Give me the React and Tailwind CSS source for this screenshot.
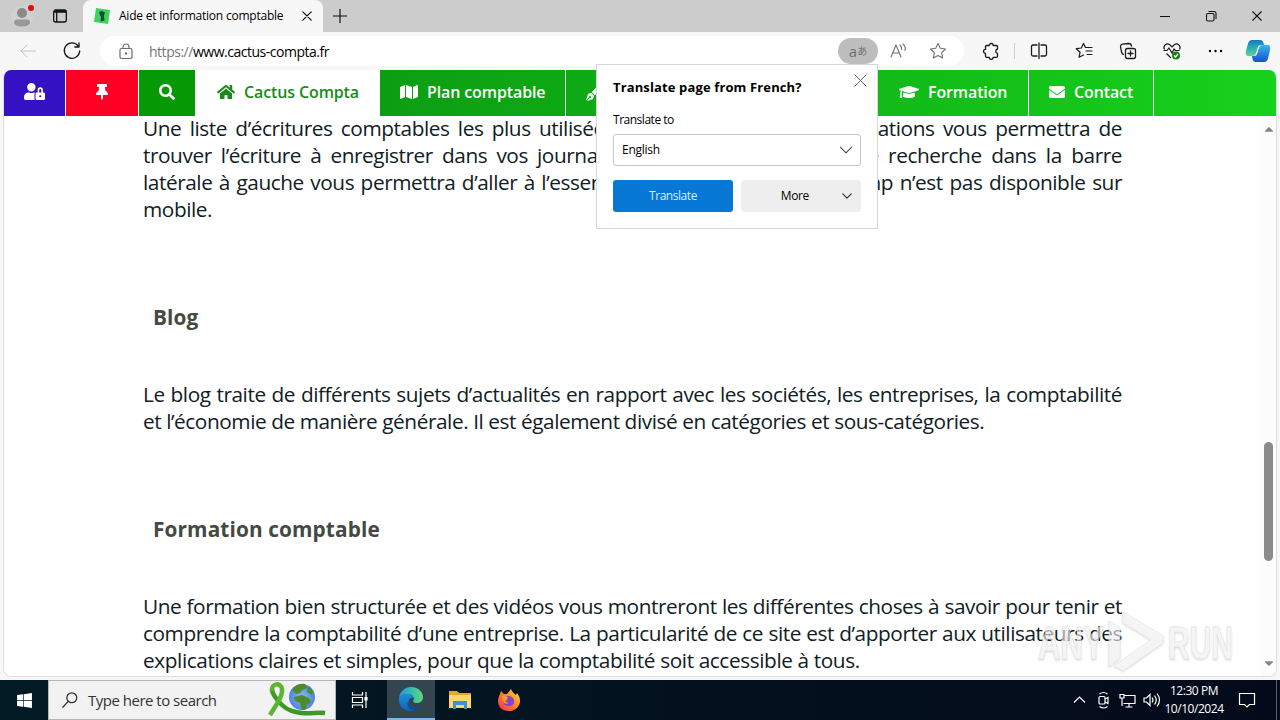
import React from 'react';
import {
  FaUserLock,
  FaThumbtack,
  FaSearch,
  FaHome,
  FaMap,
  FaPenFancy,
  FaGraduationCap,
  FaEnvelope,
  FaCaretUp,
  FaCaretDown,
  FaWindows,
} from 'react-icons/fa';

const Svg = ({ size = 20, sw = 1.1, className = '', children }) => (
  <svg
    width={size}
    height={size}
    viewBox="0 0 20 20"
    fill="none"
    stroke="currentColor"
    strokeWidth={sw}
    strokeLinecap="round"
    strokeLinejoin="round"
    className={`shrink-0 ${className}`}
  >
    {children}
  </svg>
);

const Cross = ({ size, sw, className }) => (
  <Svg size={size} sw={sw} className={className}>
    <path d="M4 4l12 12M16 4L4 16" />
  </Svg>
);

const Chevron = ({ size, sw, className }) => (
  <Svg size={size} sw={sw} className={className}>
    <path d="M3 6.5l7 7 7-7" />
  </Svg>
);

/* ===== Tab strip ===== */
const TabStrip = () => (
  <div className="flex h-8 shrink-0 bg-[#cccccc]">
    <div className="flex w-[83px] rounded-br-md">
      <svg width="40" height="32" viewBox="0 0 40 32" className="ml-1 shrink-0">
        <circle cx="18" cy="17" r="11" fill="#d3d1cf" />
        <circle cx="18" cy="13" r="5" fill="#8c8a88" />
        <path d="M10 22.500c0-2 1-3 3-3h10c2 0 3 1 3 3 0 2.500-4 4-8 4s-8-1.500-8-4z" fill="#9a9896" />
        <circle cx="27" cy="8" r="3" fill="#dd0b10" />
      </svg>
      <svg width="16" height="16" viewBox="0 0 16 16" fill="none" stroke="#111" strokeWidth="1.300" className="mt-2 ml-2">
        <rect x="1.700" y="2" width="12.600" height="12" rx="2" />
        <path d="M2 3.500h12" strokeWidth="2.500" />
        <path d="M4.700 4v10" />
      </svg>
    </div>
    <div className="flex w-[240px] items-center rounded-t-lg bg-[#f7f7f7] pl-[11px]">
      <svg width="16" height="16" viewBox="0 0 16 16" className="shrink-0">
        <path d="M2 0L16 2 14 16 0 14z" fill="#3ed160" />
        <path d="M5 4l3-1 3 1.500-1 3 .5 5-4 1 .5-5-1-1z" fill="#12502a" />
      </svg>
      <span className="ml-[9px] w-[181px] text-[12px] tracking-[-0.220px] whitespace-nowrap text-black">Aide et information comptable</span>
      <Cross size={14} sw={1.6} />
    </div>
    <div className="flex flex-1 items-center rounded-bl-md pl-[10px]">
      <svg width="14" height="14" viewBox="0 0 14 14" stroke="#111" strokeWidth="1.200">
        <path d="M7 0v14M0 7h14" />
      </svg>
    </div>
    <div className="flex w-[126px] items-center">
      <svg width="126" height="32" viewBox="0 0 126 32" fill="none" stroke="#111" strokeWidth="1.100">
        <path d="M6 16.500h10M98.500 11.500l9 9M107.500 11.500l-9 9" />
        <rect x="52.500" y="13.500" width="7.500" height="7.500" rx="1.500" />
        <path d="M54.500 11.500h5.500q2 0 2 2v5.500" />
      </svg>
    </div>
  </div>
);

/* ===== Address bar ===== */
const Toolbar = () => (
  <div className="flex h-[38px] shrink-0 items-center bg-[#f7f7f7]">
    <Svg size={20} sw={1} className="ml-[18px] text-[#c4c4c4]">
      <path d="M17.500 10H3M9 4l-6 6 6 6" />
    </Svg>
    <Svg size={20} sw={1.3} className="ml-[24px] text-[#1a1a1a]">
      <path d="M16.300 5.200A7.700 7.700 0 1 0 17.700 10M17 1.800v4.200h-4.200" />
    </Svg>
    <div className="ml-[18px] flex h-[30px] w-[864px] items-center rounded-full bg-white">
      <svg width="14" height="17" viewBox="0 0 14 17" fill="none" stroke="#6e6e6e" strokeWidth="1.200" className="ml-[19px]">
        <rect x="1" y="5.500" width="12" height="10" rx="1.500" />
        <path d="M4 5.500V4a3 3 0 0 1 6 0v1.500" />
        <circle cx="7" cy="10.500" r=".6" fill="#6e6e6e" />
      </svg>
      <span className="ml-4 text-[14px] tracking-[-0.480px] whitespace-nowrap text-black">
        <span className="text-[#767676]">https://</span>www.cactus-compta.fr
      </span>
      <div className="ml-auto flex h-[26px] w-10 items-center justify-center rounded-full bg-[#bdbdbd] text-[#707070]">
        <span className="text-[15px] leading-none">a</span>
        <span className="font-['Noto_Sans_CJK_JP'] text-[10px] leading-none">あ</span>
      </div>
      <Svg size={20} sw={1.1} className="ml-[10px] text-[#707070]">
        <path d="M3 16L8 4l5 12M4.800 12h6.500M12 4q2 2 1.500 4.500M15 3q3 2.500 2 6.500" />
      </Svg>
      <Svg size={20} sw={1.1} className="mr-4 ml-5 text-[#707070]">
        <path d="M10 2.500l2.300 4.800 5.200.7-3.800 3.700.9 5.300-4.600-2.500L5.400 17l.9-5.300L2.500 8l5.200-.7z" />
      </Svg>
    </div>
    <div className="flex flex-1 items-center text-[#1a1a1a]">
      <Svg size={20} sw={1.3} className="ml-[17px]">
        <path d="M5.500 4.500h2.700a2 2 0 0 1 4 0H15.500q1 0 1 1V8a2.200 2.200 0 0 0 0 4.300v3q0 1-1 1h-3.300a2 2 0 0 1-4 0H5.500q-1 0-1-1v-3a2 2 0 0 1 0-4V5.500q0-1 1-1z" />
      </Svg>
      <div className="ml-[13px] h-4 w-px bg-[#cfcfcf]" />
      <Svg size={20} sw={1.3} className="ml-[14px]">
        <path d="M8 4H4Q2.500 4 2.500 5.500v8Q2.500 15 4 15h4M12 4h4q1.500 0 1.500 1.500v8q0 1.500-1.500 1.500h-4M10 2v15.500" />
      </Svg>
      <Svg size={20} sw={1.2} className="ml-[25px]">
        <path d="M12.500 6.500h-1L9.500 2.500 7.300 7l-5 .7 3.700 3.600-.9 5L9.500 14M13 6.500h5M12 10h6M13 13.500h5" />
      </Svg>
      <Svg size={20} sw={1.3} className="ml-[24px]">
        <rect x="7.500" y="7.500" width="10" height="10" rx="2" />
        <path d="M12.500 10v5M10 12.500h5M5.500 13.500q-1.500-.5-2-2.500L2.500 5.500q0-2 2-2.300L11 2.500q2 0 2.500 2.500" />
      </Svg>
      <svg width="20" height="20" viewBox="0 0 20 20" fill="none" stroke="#1a1a1a" strokeWidth="1.200" className="ml-[24px]">
        <path d="M2.500 8.500C.5 5 4.500 1.500 7.500 3.500L10 6l2.500-2.500c3-2 7 1.500 5 5M4.500 12.500l4.500 4.500M1.500 9.500H5l2-2.500 3 5 2-4 1.500 1.500h4" />
        <circle cx="14" cy="14.500" r="4" fill="#168019" stroke="none" />
        <path d="M12 14.500l1.500 1.500 2.500-3" stroke="#fff" />
      </svg>
      <svg width="16" height="4" viewBox="0 0 16 4" className="ml-[26px]">
        <circle cx="2" cy="2" r="1.200" />
        <circle cx="7.500" cy="2" r="1.200" />
        <circle cx="13" cy="2" r="1.200" />
      </svg>
      <svg width="26" height="26" viewBox="0 0 26 26" className="ml-[21px]">
        <defs>
          <linearGradient id="cpa" x1="0" y1="0" x2="0" y2="1">
            <stop offset="0" stopColor="#1676c4" />
            <stop offset=".5" stopColor="#26b0b6" />
            <stop offset="1" stopColor="#68d19b" />
          </linearGradient>
          <linearGradient id="cpb" x1="0" y1="0" x2="0" y2="1">
            <stop offset="0" stopColor="#3bb4f5" />
            <stop offset="1" stopColor="#1550c5" />
          </linearGradient>
        </defs>
        <path d="M7 2h8c2 0 3 1 3.500 3l.5 2h-3c-2 0-3 1-3.500 3l-1.500 5c-.6 2-1.500 3-4 3H4c-3 0-3.700-2-3-5L3 5.500C3.600 3.500 5 2 7 2z" fill="url(#cpa)" />
        <path d="M19 24h-8c-2 0-3-1-3.500-3L7 18h2c2 0 3-1 3.500-3L14 10c.6-2 1.500-3 4-3h4c3 0 3.700 2 3 5l-2 8.500c-.6 2-2 3.500-4 3.500z" fill="url(#cpb)" />
      </svg>
    </div>
  </div>
);

/* ===== Site navigation ===== */
const SiteNav = () => (
  <nav className="flex h-[46px] w-full shrink-0 text-[16px] font-semibold tracking-[-0.120px] text-white">
    <div className="flex w-[62px] items-center justify-center border-r border-white bg-[#3412c3] pb-[3px]">
      <FaUserLock size={21} />
    </div>
    <div className="flex w-[73px] items-center justify-center border-r border-white bg-[#ff0025] pb-[3px]">
      <FaThumbtack size={16} />
    </div>
    <div className="flex w-[56px] items-center justify-center bg-[#059905] pb-[3px]">
      <FaSearch size={16} />
    </div>
    <div className="flex w-[185px] items-center bg-white pb-0.5 pl-[22px] text-[#188c18]">
      <FaHome size={18} />
      <span className="ml-[9px] whitespace-nowrap">Cactus Compta</span>
    </div>
    <div className="flex flex-1 bg-linear-to-r from-[#0c9e12] to-[#17d11c]">
      <div className="flex w-[186px] items-center border-r border-white pb-0.5 pl-5">
        <FaMap size={18} />
        <span className="ml-[9px] whitespace-nowrap">Plan comptable</span>
      </div>
      <div className="flex w-[313px] items-center pl-[20px]">
        <FaPenFancy size={16} />
      </div>
      <div className="flex w-[150px] items-center border-r border-white pb-0.5 pl-5">
        <FaGraduationCap size={20} />
        <span className="ml-[9px] whitespace-nowrap">Formation</span>
      </div>
      <div className="flex w-[125px] items-center border-r border-white pb-0.5 pl-5">
        <FaEnvelope size={16} />
        <span className="ml-[9px] whitespace-nowrap">Contact</span>
      </div>
    </div>
  </nav>
);

/* ===== Article ===== */
const Line = ({ children }) => (
  <span className="block whitespace-nowrap [text-align-last:justify]">{children}</span>
);

// lines that run behind the translate bubble are anchored at both margins
const SplitLine = ({ left, right }) => (
  <span className="flex justify-between whitespace-nowrap">
    {left}
    {right}
  </span>
);

const Article = () => (
  <article className="ml-[139px] w-[979px] text-[20.8px] leading-[27px] tracking-[-0.435px] text-[#10201f]">
    <p className="-mt-px">
      <SplitLine
        left={<span className="[word-spacing:3.400px]">Une liste d’écritures comptables les plus utilisées</span>}
        right={<span className="[word-spacing:3.500px]">opérations vous permettra de</span>}
      />
      <SplitLine
        left={<span className="[word-spacing:4.200px]">trouver l’écriture à enregistrer dans vos journaux</span>}
        right={<span className="[word-spacing:4.500px]">de recherche dans la barre</span>}
      />
      <SplitLine
        left={<span className="[word-spacing:1.500px]">latérale à gauche vous permettra d’aller à l’essentiel</span>}
        right={<span className="[word-spacing:1.700px]">champ n’est pas disponible sur</span>}
      />
      <span className="block">mobile.</span>
    </p>
    <h2 className="mt-[81px] ml-[10px] font-bold tracking-[0.120px] text-[#444941]">Blog</h2>
    <p className="mt-[50px]">
      <Line>Le blog traite de différents sujets d’actualités en rapport avec les sociétés, les entreprises, la comptabilité</Line>
      <span className="block whitespace-nowrap">et l’économie de manière générale. Il est également divisé en catégories et sous-catégories.</span>
    </p>
    <h2 className="mt-[81px] ml-[10px] font-bold tracking-[0.120px] text-[#444941]">Formation comptable</h2>
    <p className="mt-[50px]">
      <Line>Une formation bien structurée et des vidéos vous montreront les différentes choses à savoir pour tenir et</Line>
      <Line>comprendre la comptabilité d’une entreprise. La particularité de ce site est d’apporter aux utilisateurs des</Line>
      <span className="block tracking-[-0.400px] whitespace-nowrap">explications claires et simples, pour que la comptabilité soit accessible à tous.</span>
    </p>
  </article>
);

const Scrollbar = () => (
  <div className="flex w-[15px] flex-col items-center bg-[#fcfcfc] py-[6px] text-[#858585]">
    <FaCaretUp size={14} />
    <div className="mt-[306px] h-[119px] w-[9px] rounded-full bg-[#8b8b8b]" />
    <FaCaretDown size={14} className="mt-auto" />
  </div>
);

/* ===== Translate bubble ===== */
const TranslateBubble = () => (
  <div className="absolute top-[64px] left-[596px] flex h-[165px] w-[282px] flex-col border border-[#d8d8d8] bg-white px-4 text-[12px] text-black">
    <div className="mt-[14px] flex h-[18px] items-center justify-between">
      <span className="text-[13px] font-bold tracking-[0.130px] whitespace-nowrap">Translate page from French?</span>
      <Cross size={19} sw={1} className="-mt-4 -mr-[9px] text-[#555]" />
    </div>
    <span className="mt-[14px] leading-[18px] tracking-[-0.480px]">Translate to</span>
    <div className="mt-[5px] flex h-8 items-center justify-between rounded-[3px] border border-[#c6c6c6] pr-[6px] pl-2">
      <span className="tracking-[-0.250px]">English</span>
      <Chevron size={16} sw={1.3} className="text-[#444]" />
    </div>
    <div className="mt-[14px] flex gap-2">
      <div className="flex h-8 w-[120px] items-center justify-center rounded-[3px] bg-[#0878d7] tracking-[-0.450px] text-[#d9edff]">Translate</div>
      <div className="flex h-8 w-[120px] items-center justify-end rounded-[3px] bg-[#eeeeee] pr-2">
        <span className="mr-8 tracking-[-0.350px]">More</span>
        <Chevron size={12} sw={2} className="text-[#333]" />
      </div>
    </div>
  </div>
);

/* ===== Recorder watermark ===== */
const Watermark = () => (
  <svg
    width="204"
    height="72"
    viewBox="0 0 204 72"
    className="absolute top-[604px] left-[1034px] drop-shadow-[0_1px_1px_rgba(0,0,0,0.18)]"
  >
    <g fill="#ffffff" fillOpacity=".6" stroke="#dcdcdc" strokeOpacity=".7" strokeWidth=".8">
      <text x="4" y="55" fontSize="46" fontWeight="700" fontFamily="Liberation Sans" textLength="66" lengthAdjust="spacingAndGlyphs">ANY</text>
      <path d="M89 8l40 24v7L89 67l-9-5 37-26-28-17z" />
      <path d="M75 17l11 7v30l-11 9z" />
      <text x="134" y="55" fontSize="46" fontWeight="700" fontFamily="Liberation Sans" textLength="65" lengthAdjust="spacingAndGlyphs">RUN</text>
    </g>
  </svg>
);

/* ===== Taskbar ===== */
const Doodle = () => (
  <svg width="64" height="38" viewBox="0 0 64 38" className="ml-auto mr-[6px]">
    <defs>
      <radialGradient id="globe">
        <stop offset="0" stopColor="#7fc0f2" />
        <stop offset="1" stopColor="#4f83da" />
      </radialGradient>
    </defs>
    <path
      d="M7 8c0 5 5 11 10 16 6 6 13 7 20 8 8 1 15-1 23 0"
      fill="none"
      stroke="#3c9a22"
      strokeWidth="4.500"
    />
    <path
      d="M7 10C6 2 16 1 17 8c1 7-4 13-7 18l-5 8"
      fill="none"
      stroke="#5cb531"
      strokeWidth="4.500"
    />
    <circle cx="37" cy="16" r="13" fill="url(#globe)" />
    <path d="M27 9c3-5 8-7 13-6l2 4-5 2-2 3-4 1zM29 16l8-2 7 3 2 4-4 3-2 5h-3l-2-7-5-2zM43 5l5 5-1 4-5-3z" fill="#4f8a2d" />
  </svg>
);

const Edge = () => (
  <svg width="26" height="26" viewBox="0 0 26 26">
    <defs>
      <linearGradient id="edgeTop" x1="0" x2="1">
        <stop offset="0" stopColor="#1d9be0" />
        <stop offset="1" stopColor="#5bd879" />
      </linearGradient>
      <linearGradient id="edgeLow" x1="0" y1="0" x2="0" y2="1">
        <stop offset="0" stopColor="#1a8fdc" />
        <stop offset="1" stopColor="#1261b3" />
      </linearGradient>
    </defs>
    <path d="M1 12C2 5 7 1 13 1c8 0 12 6 12 10 0 4-3 6-6 6-4 0-4-1.500-3.500-2.500C17 11 14 8 10 8c-4 0-7 1.500-9 4z" fill="url(#edgeTop)" />
    <path d="M1 12c2-3 5-4 8-4 4 0 6 2 6.500 4-3-1-5 1-5 4 0 4 4 7 12 4-2 3-6 5-10 5C5 25 0 19 1 12z" fill="url(#edgeLow)" />
    <path d="M10.500 16c0 4 4 7 12 4-2 2.500-4 4-7 4.500C10 23 8 17 10.500 16z" fill="#114a91" />
  </svg>
);

const Firefox = () => (
  <svg width="24" height="24" viewBox="0 0 24 24">
    <defs>
      <linearGradient id="ff" x1="1" y1="0" x2="0" y2="1">
        <stop offset="0" stopColor="#ffe34a" />
        <stop offset=".45" stopColor="#ff8a1d" />
        <stop offset="1" stopColor="#f42a56" />
      </linearGradient>
    </defs>
    <path d="M3 6l1-3 3 3 3 0 4-5c1 3 3 4 5 6l1-2c3 4 4 8 2 12-2 4-6 6-10 6C5 23 1 19 1 13c0-3 1-5 2-7z" fill="url(#ff)" />
    <path d="M8 9c3-2 8-1 9 3s-2 6-5 6-6-2-6-5l3 0 2-2z" fill="#8043c9" />
    <path d="M5 8c3-1 5 0 6 2l-3 2c0 2 2 3 4 3-3 2-7 0-7-7z" fill="#ff9a23" />
  </svg>
);

const Taskbar = () => (
  <div className="flex h-10 shrink-0 items-center bg-[#04121d] bg-linear-to-r from-[#021a24] to-[#040a1a] text-white">
    <div className="flex w-12 justify-center">
      <FaWindows size={17} />
    </div>
    <div className="flex h-10 w-[288px] items-center border border-[#b5b5b5] bg-[#f2f2f2] text-[#333]">
      <Svg size={18} sw={1.4} className="ml-[12px]">
        <circle cx="12" cy="7.500" r="5.500" />
        <path d="M8 11.500l-6 6.500" />
      </Svg>
      <span className="ml-[9px] text-[15px] tracking-[-0.500px] whitespace-nowrap">Type here to search</span>
      <Doodle />
    </div>
    <div className="flex w-[51px] justify-center pr-[3px]">
      <svg width="18" height="18" viewBox="0 0 18 18" fill="none" stroke="#fff" strokeWidth="1.200">
        <path d="M1.500 1v3h10V1M1.500 17v-3h10v3M1.500 6.500h10v5h-10zM15 1v16" />
        <path d="M14 6.500h2v2.500h-2z" fill="#fff" />
      </svg>
    </div>
    <div className="flex h-10 w-12 items-center justify-center border-b-2 border-[#76b9ed] bg-[#33454f]">
      <Edge />
    </div>
    <div className="flex w-[49px] justify-center">
      <svg width="22" height="20" viewBox="0 0 22 20">
        <path d="M0 1h8l2 2h12v15H0z" fill="#e9a823" />
        <path d="M0 5h22v13H0z" fill="#ffd869" />
        <path d="M4 11h14v8h-3v-4H7v4H4z" fill="#3795d4" />
      </svg>
    </div>
    <div className="flex w-[49px] justify-center">
      <Firefox />
    </div>
    <div className="ml-auto flex items-center">
      <svg width="92" height="20" viewBox="0 0 92 20" fill="none" stroke="#fff" strokeWidth="1.200">
        <path d="M2 12.500l5.500-5.500 5.500 5.500" />
        <rect x="27" y="6.500" width="6" height="7.500" rx="1" />
        <path d="M33 9l3-1.500v6L33 12M27.500 4q4-3 8 0M27.500 16.500q4 3 8 0" />
        <path d="M52 5.500h11v8H51.500M48 4.500h4v3.500h-4zM50 8v8M57 14v3M53.500 17h7" />
        <path d="M72 8h2.500L78 4.500v11L74.500 12H72zM80 7.500q2 2.500 0 5M82.500 5.500q3.500 4.500 0 9M85 3.500q5 6.500 0 13" />
      </svg>
      <div className="-ml-0.5 flex w-[64px] flex-col items-center text-[12px] leading-[18px] tracking-[-0.450px] whitespace-nowrap">
        <span>12:30 PM</span>
        <span>10/10/2024</span>
      </div>
      <svg width="18" height="18" viewBox="0 0 18 18" fill="none" stroke="#fff" strokeWidth="1.200" className="ml-3">
        <path d="M1.500 2.500h15v11h-5L9 16l-2.500-2.500h-5z" />
      </svg>
      <div className="ml-5 h-10 w-px bg-[#56606c]" />
      <div className="w-[3px]" />
    </div>
  </div>
);

const App = () => (
  <div className="relative flex h-[720px] w-[1280px] flex-col overflow-hidden bg-[#f7f7f7] font-['Open_Sans',sans-serif]">
    <TabStrip />
    <Toolbar />
    <div className="mx-[3px] mb-[3px] flex min-h-0 flex-1 flex-col overflow-hidden rounded-lg border border-t-0 border-[#dedede] bg-white">
      <SiteNav />
      <div className="flex min-h-0 flex-1 justify-between overflow-hidden">
        <Article />
        <Scrollbar />
      </div>
    </div>
    <Taskbar />
    <TranslateBubble />
    <Watermark />
  </div>
);

export default App;
